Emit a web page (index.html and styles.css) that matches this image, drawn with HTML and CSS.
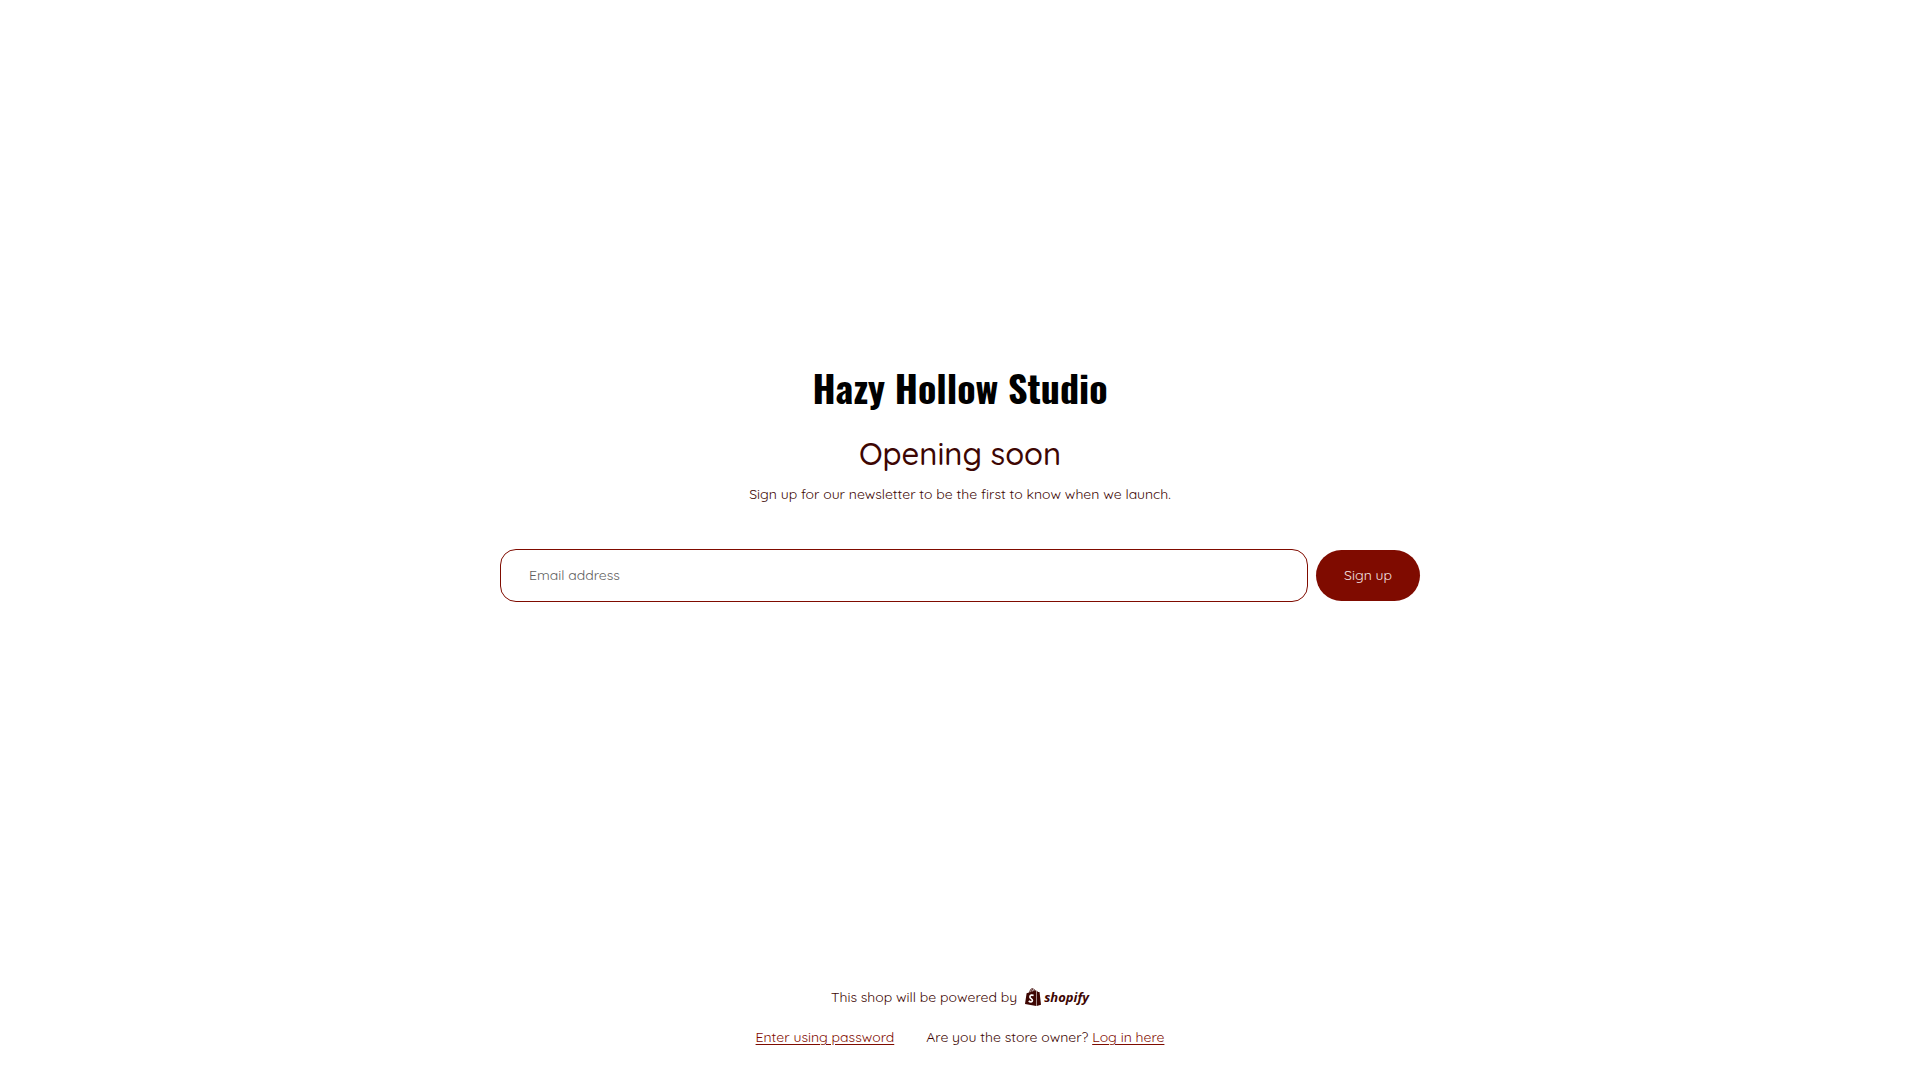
FILE: index.html
```
<!DOCTYPE html>
<html lang="en">
<head>
    <meta charset="utf-8">
    <meta name="viewport" content="width=device-width, initial-scale=1">
    <title>Hazy Hollow Studio</title>
    <link rel="stylesheet" href="styles.css">
</head>
<body>
    <main class="password-main">
        <h1 class="logo">Hazy Hollow Studio</h1>
        <h2 class="heading">Opening soon</h2>
        <p class="message">Sign up for our newsletter to be the first to know when we launch.</p>
        <form class="newsletter-form">
            <input class="field-input" type="email" name="email" placeholder="Email address" aria-label="Email address">
            <button class="button" type="submit">Sign up</button>
        </form>
    </main>
    <footer class="password-footer">
        <div class="powered">
            <span>This shop will be powered by</span>
            <a class="shopify-link" href="#" aria-label="Shopify">
                <svg class="shopify-bag" width="16" height="18" viewBox="0 0 16 18" aria-hidden="true">
                    <path d="M0 16 1.6 5.2 4 4.4C4.6 2 6 .4 7.5.3c.7 0 1.1.3 1.4.9.7 0 1.2.6 1.5 1.4l.8-.2V18z" fill="currentColor"/>
                    <path d="M11.7 2.5 13 4l1.3.1c.2 0 .2.1.3.3L16 16.8 11.7 18z" fill="currentColor"/>
                    <path d="M5 4.2C5.5 2.6 6.4 1.5 7.4 1.3M7 3.7C7.2 2.7 7.7 2 8.5 1.7M8.4 1.3c.4.6.5 1.1.5 1.8" fill="none" stroke="#fff" stroke-width=".7"/>
                    <path d="M8.6 7.4C7.2 6.7 4.9 7 4.9 8.9c0 1.7 2.5 1.8 2.5 3.5 0 1.8-2.1 1.8-3.7.6" fill="none" stroke="#fff" stroke-width="1.7"/>
                </svg>
                <span class="shopify-name">shopify</span>
            </a>
        </div>
        <div class="footer-links">
            <a class="link" href="#">Enter using password</a>
            <span>Are you the store owner? <a class="link" href="#">Log in here</a></span>
        </div>
    </footer>
</body>
</html>
```

FILE: styles.css
```
* {
    box-sizing: border-box;
}
body {
    display: flex;
    flex-direction: column;
    min-height: 100vh;
    margin: 0;
    background-color: #fff;
    color: #3d0603;
    font-family: Quicksand, Lato, sans-serif;
    font-size: 14px;
    line-height: 24px;
}
.password-main {
    flex: 1;
    display: flex;
    flex-direction: column;
    align-items: center;
    justify-content: center;
    padding: 0 20px;
    text-align: center;
}
.logo {
    margin: 0 0 16px;
    color: #000;
    font-family: Oswald, "Roboto Condensed", "Liberation Sans Narrow", sans-serif;
    font-size: 38px;
    font-weight: 700;
    line-height: 54px;
}
.heading {
    margin: 0 0 4px;
    font-size: 31px;
    font-weight: 500;
    line-height: 48px;
}
.message {
    margin: 0 0 43px;
}
.newsletter-form {
    display: flex;
    align-items: center;
    gap: 8px;
    width: 100%;
    max-width: 920px;
}
.field-input {
    flex: 1;
    min-width: 0;
    height: 53px;
    padding: 0 28px 2px;
    border: 1px solid #7f0b00;
    border-radius: 16px;
    background-color: #fff;
    color: #3d0603;
    font: inherit;
}
.field-input::placeholder {
    color: #606060;
    opacity: 1;
}
.button {
    height: 51px;
    padding: 0 28px 2px;
    border: 0;
    border-radius: 26px;
    background-color: #7f0b00;
    color: #f5e6e5;
    font: inherit;
    cursor: pointer;
}
.password-footer {
    display: flex;
    flex-direction: column;
    align-items: center;
    gap: 16px;
    padding: 23px 20px 31px;
}
.powered {
    display: flex;
    align-items: center;
    gap: 8px;
}
.shopify-link {
    display: flex;
    align-items: center;
    gap: 3px;
    color: #3d0603;
    text-decoration: none;
}
.shopify-name {
    font-family: "Open Sans", sans-serif;
    font-size: 13px;
    font-style: italic;
    font-weight: 700;
}
.footer-links {
    display: flex;
    flex-wrap: wrap;
    justify-content: center;
    gap: 0 32px;
}
.link {
    color: #7f0b00;
    text-underline-offset: 2px;
}
```
